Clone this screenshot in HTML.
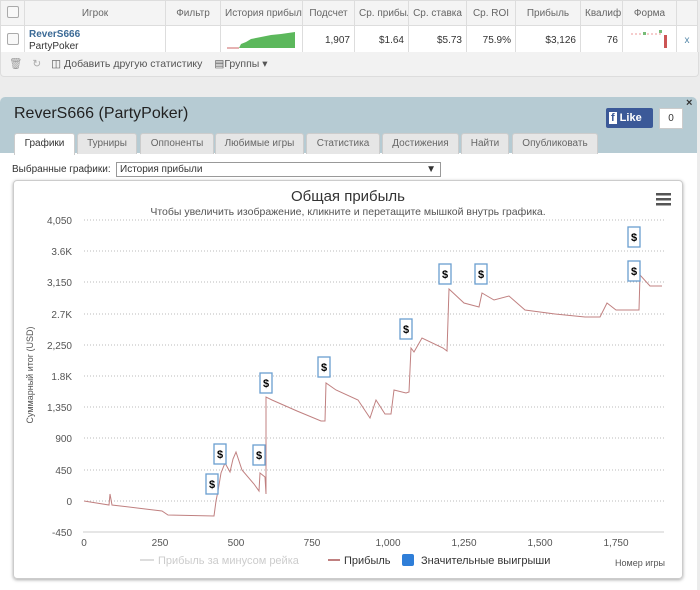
<!DOCTYPE html><html><head><meta charset="utf-8"><style>
body{margin:0;width:700px;height:590px;background:#ececec;font-family:"Liberation Sans",sans-serif;position:relative;overflow:hidden;font-size:11px;color:#333}
.a{position:absolute}
table{border-collapse:collapse;position:absolute;left:0;top:0;width:697px;background:#fff;table-layout:fixed}
td{border:1px solid #ddd;padding:0 4px;font-size:10px;white-space:nowrap;overflow:hidden}
.h td{height:24px;background:#f4f4f4;color:#666;text-align:center}
.r td{height:26px;text-align:right;color:#333}
.cb{width:10px;height:10px;border:1px solid #aaa;border-radius:2px;background:#f8f8f8;display:inline-block}
.tab{position:absolute;top:133px;height:20px;background:#e6e6e6;border:1px solid #ccc;border-bottom:none;font-size:10px;color:#666;text-align:center;line-height:20px;border-radius:3px 3px 0 0}
</style></head><body>
<table>
<colgroup><col style="width:24px"><col style="width:141px"><col style="width:55px"><col style="width:82px"><col style="width:52px"><col style="width:54px"><col style="width:58px"><col style="width:49px"><col style="width:65px"><col style="width:42px"><col style="width:54px"><col style="width:21px"></colgroup>
<tr class="h"><td style="padding:0 6px"><span class="cb"></span></td><td>Игрок</td><td>Фильтр</td><td>История прибыли</td><td>Подсчет</td><td>Ср. прибыль</td><td>Ср. ставка</td><td>Ср. ROI</td><td>Прибыль</td><td>Квалиф</td><td>Форма</td><td></td></tr>
<tr class="r"><td style="padding:0 6px"><span class="cb"></span></td><td style="text-align:left;line-height:12px"><b style="color:#3b6a96">ReverS666</b><br>PartyPoker</td><td></td><td style="padding:0"><svg width="82" height="26"><polyline points="6,22 18,22 20,18 25,16 30,13 40,11 50,9 60,8 74,6 74,22 18,22" fill="#5cb85c"/><line x1="6" y1="22" x2="18" y2="22" stroke="#c66"/></svg></td><td>1,907</td><td>$1.64</td><td>$5.73</td><td>75.9%</td><td>$3,126</td><td>76</td><td style="padding:0"><svg width="54" height="26"><line x1="8" y1="8" x2="40" y2="8" stroke="#e99" stroke-dasharray="2 2"/><rect x="20" y="6" width="3" height="3" fill="#7b7"/><rect x="36" y="4" width="3" height="3" fill="#7b7"/><rect x="41" y="9" width="3" height="13" fill="#c55"/></svg></td><td style="color:#58a;text-align:center;padding:0">x</td></tr>
</table>
<div class="a" style="left:0;top:52px;width:697px;height:24px;background:#f2f2f2;border:1px solid #ddd;border-top:none;font-size:10.5px;color:#555;line-height:24px;border-radius:0 0 4px 4px"><span style="margin-left:8px;color:#999">🗑</span><span style="margin-left:10px;color:#aaa">↻</span><span style="margin-left:10px">◫ Добавить другую статистику</span><span style="margin-left:12px">▤Группы ▾</span></div>
<div class="a" style="left:0;top:97px;width:697px;height:493px;background:#fff;border-radius:5px 5px 0 0"></div>
<div class="a" style="left:0;top:97px;width:697px;height:56px;background:#b6cbd3;border-radius:5px 5px 0 0"></div>
<div class="a" style="left:14px;top:105px;font-size:16px;color:#222">ReverS666 (PartyPoker)</div>
<div class="a" style="left:606px;top:108px;width:47px;height:20px;background:#3b5998;color:#fff;font-weight:bold;font-size:11px;line-height:20px;border-radius:2px"><span style="background:#fff;color:#3b5998;padding:0 2px;margin:0 3px">f</span>Like</div>
<div class="a" style="left:659px;top:108px;width:22px;height:19px;background:#fff;border:1px solid #ccc;text-align:center;line-height:19px;font-size:10px">0</div>
<div class="a" style="left:686px;top:97px;font-size:11px;font-weight:bold">×</div>
<div class="tab" style="left:14px;width:59px;background:#fff;color:#333;height:21px">Графики</div>
<div class="tab" style="left:77px;width:58px">Турниры</div>
<div class="tab" style="left:140px;width:72px">Оппоненты</div>
<div class="tab" style="left:215px;width:87px">Любимые игры</div>
<div class="tab" style="left:306px;width:72px">Статистика</div>
<div class="tab" style="left:382px;width:75px">Достижения</div>
<div class="tab" style="left:461px;width:46px">Найти</div>
<div class="tab" style="left:512px;width:84px">Опубликовать</div>
<div class="a" style="left:12px;top:164px;font-size:10px">Выбранные графики:</div>
<div class="a" style="left:116px;top:162px;width:320px;height:13px;border:1px solid #999;font-size:10px;line-height:13px;padding-left:3px">История прибыли<span style="float:right;margin-right:4px">▼</span></div>
<div class="a" style="left:13px;top:180px;width:668px;height:397px;border:1px solid #ccc;border-radius:4px;box-shadow:0 1px 3px #aaa"></div>
<svg class="a" style="left:0;top:0" width="700" height="590" font-family="Liberation Sans,sans-serif">
<text x="348" y="201" font-size="15" fill="#333" text-anchor="middle">Общая прибыль</text>
<text x="348" y="215" font-size="10.5" fill="#555" text-anchor="middle">Чтобы увеличить изображение, кликните и перетащите мышкой внутрь графика.</text>
<g fill="#555"><rect x="656" y="193" width="15" height="2.5"/><rect x="656" y="198" width="15" height="2.5"/><rect x="656" y="203" width="15" height="2.5"/></g>
<g stroke="#bbb" stroke-dasharray="1 2"><line x1="84" x2="664" y1="220" y2="220"/><line x1="84" x2="664" y1="251" y2="251"/><line x1="84" x2="664" y1="282" y2="282"/><line x1="84" x2="664" y1="314" y2="314"/><line x1="84" x2="664" y1="345" y2="345"/><line x1="84" x2="664" y1="376" y2="376"/><line x1="84" x2="664" y1="407" y2="407"/><line x1="84" x2="664" y1="438" y2="438"/><line x1="84" x2="664" y1="470" y2="470"/><line x1="84" x2="664" y1="501" y2="501"/></g>
<line x1="83" x2="664" y1="532" y2="532" stroke="#ccc"/>
<g font-size="10" fill="#555" text-anchor="end"><text x="72" y="224">4,050</text><text x="72" y="255">3.6K</text><text x="72" y="286">3,150</text><text x="72" y="318">2.7K</text><text x="72" y="349">2,250</text><text x="72" y="380">1.8K</text><text x="72" y="411">1,350</text><text x="72" y="442">900</text><text x="72" y="474">450</text><text x="72" y="505">0</text><text x="72" y="536">-450</text></g>
<g font-size="10" fill="#555" text-anchor="middle"><text x="84" y="546">0</text><text x="160" y="546">250</text><text x="236" y="546">500</text><text x="312" y="546">750</text><text x="388" y="546">1,000</text><text x="464" y="546">1,250</text><text x="540" y="546">1,500</text><text x="616" y="546">1,750</text></g>
<text transform="translate(33,375) rotate(-90)" font-size="9" fill="#555" text-anchor="middle">Суммарный итог (USD)</text>
<polyline fill="none" stroke="#c08080" stroke-width="1" points="84,501 109,505 110,494 112,505 162,511 168,515 214,516 216,501 218,491 221,473 225,463 230,472 233,459 236,452 242,470 254,484 259,491 260,473 265,477 266,494 266,397 272,400 297,411 321,421 325,421 326,383 336,390 358,400 370,418 376,400 385,414 391,414 394,390 406,393 409,392 411,348 414,352 422,338 443,348 447,351 449,289 464,303 479,307 482,293 494,300 509,296 525,310 555,314 585,317 600,317 607,303 616,310 639,310 640,275 650,286 662,286"/>
<g fill="#fff" stroke="#6a9fd0" stroke-width="1.3" font-size="12" font-weight="bold">
<rect x="206" y="474" width="12" height="20"/><rect x="214" y="444" width="12" height="20"/><rect x="253" y="445" width="12" height="20"/><rect x="260" y="373" width="12" height="20"/><rect x="318" y="357" width="12" height="20"/><rect x="400" y="319" width="12" height="20"/><rect x="439" y="264" width="12" height="20"/><rect x="475" y="264" width="12" height="20"/><rect x="628" y="227" width="12" height="20"/><rect x="628" y="261" width="12" height="20"/></g>
<g font-size="11" font-weight="bold" fill="#000" text-anchor="middle"><text x="212" y="488">$</text><text x="220" y="458">$</text><text x="259" y="459">$</text><text x="266" y="387">$</text><text x="324" y="371">$</text><text x="406" y="333">$</text><text x="445" y="278">$</text><text x="481" y="278">$</text><text x="634" y="241">$</text><text x="634" y="275">$</text></g>
<line x1="140" x2="154" y1="560" y2="560" stroke="#ddd" stroke-width="2"/><text x="158" y="564" font-size="11" fill="#ccc">Прибыль за минусом рейка</text>
<line x1="328" x2="340" y1="560" y2="560" stroke="#c08080" stroke-width="2"/><text x="344" y="564" font-size="11" fill="#333">Прибыль</text>
<rect x="402" y="554" width="12" height="12" rx="2" fill="#2f7ed8"/><text x="421" y="564" font-size="11" fill="#333">Значительные выигрыши</text>
<text x="665" y="566" font-size="9" fill="#555" text-anchor="end">Номер игры</text>
</svg>
</body></html>
